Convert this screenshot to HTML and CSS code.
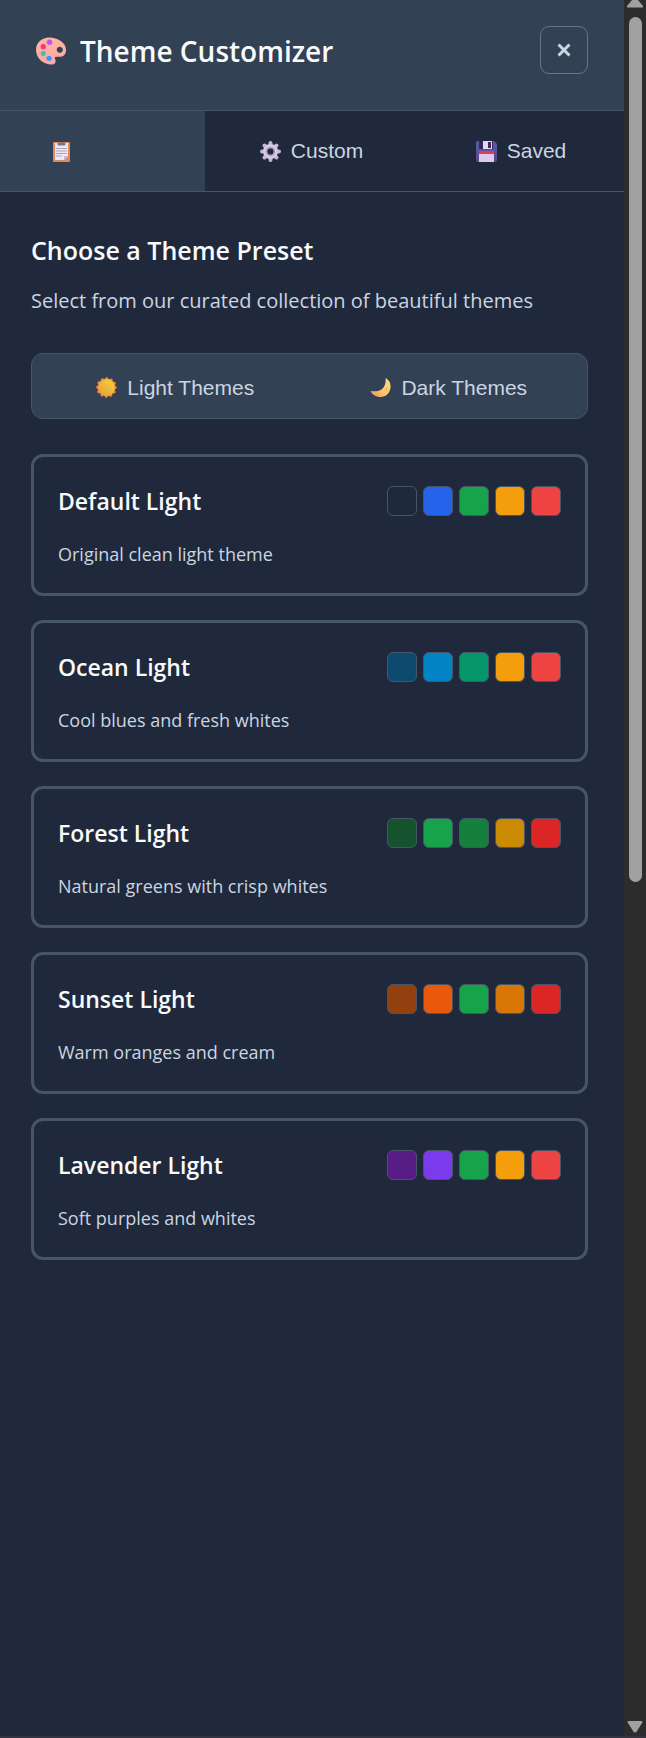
FILE: index.html
```html
<!DOCTYPE html>
<html lang="en">
<head>
<meta charset="utf-8">
<meta name="viewport" content="width=device-width, initial-scale=1">
<title>Theme Customizer</title>
<link rel="stylesheet" href="styles.css">
</head>
<body>
<div class="window">
  <main class="panel">
    <header class="header">
      <h1 class="title">
        <svg class="icon-palette" viewBox="0 0 32 28" aria-hidden="true">
          <defs><linearGradient id="skin" x1="0" y1="0" x2="0" y2="1"><stop offset="0" stop-color="#ffb7a0"/><stop offset="1" stop-color="#f8aaa4"/></linearGradient></defs>
          <path fill="url(#skin)" fill-rule="evenodd" d="M14 0C22 0 31 5 31 13c0 5-3 7-7 7h-3c-2 0-2 1-1 3 1 3-1 5-4 5C7 28 0 21 0 13 0 5 6 0 14 0Zm10.500 9.500a3.200 3.200 0 1 0 .1 0Z"/>
          <circle cx="14" cy="5" r="2.800" fill="#b85bea"/><circle cx="7.500" cy="9.500" r="2.700" fill="#f5338b"/><circle cx="7.500" cy="16.500" r="2.600" fill="#3dbdb4"/><circle cx="13.500" cy="21.500" r="2.700" fill="#4293f5"/>
        </svg>
        Theme Customizer
      </h1>
      <button class="close" type="button" aria-label="Close">
        <svg class="icon-close" viewBox="0 0 14 14" aria-hidden="true"><path d="M1.500 1.500l11 11M12.500 1.500l-11 11" stroke="currentColor" stroke-width="3"/></svg>
      </button>
    </header>

    <nav class="tabs" role="tablist">
      <button class="tab tab-active" type="button" role="tab" aria-selected="true">
        <svg class="icon" viewBox="0 0 21 21" aria-hidden="true">
          <rect x="2" y="1" width="17" height="20" rx="1" fill="#d98c59"/><path d="M4 2h13v13l-4 4H4Z" fill="#eee6f5"/><path d="M17 15l-4 4v-4Z" fill="#c9b8d8"/>
          <path d="M7 4V2h2.500a1.500 1.500 0 0 1 2 0H14v2Z" fill="#81737f" stroke="#81737f"/><path d="M5 7.500h11M5 10h11M5 12.500h11M5 15h6" stroke="#afa5b8"/>
        </svg>
        Presets
      </button>
      <button class="tab" type="button" role="tab" aria-selected="false">
        <svg class="icon" viewBox="0 0 21 21" aria-hidden="true">
          <g stroke="#c5b4d8" stroke-width="4" stroke-linecap="round"><path d="M10.500 2v17M2 10.500h17M4.500 4.500l12 12M16.500 4.500l-12 12"/></g>
          <circle cx="10.500" cy="10.500" r="7.500" fill="#d6cae0"/><circle cx="10.500" cy="10.500" r="4.500" fill="#a493b7"/><circle cx="10.500" cy="10.500" r="3" fill="#1f293b"/>
        </svg>
        Custom
      </button>
      <button class="tab" type="button" role="tab" aria-selected="false">
        <svg class="icon" viewBox="0 0 21 21" aria-hidden="true">
          <defs><linearGradient id="disk" x1="0" y1="0" x2="0" y2="1"><stop offset="0" stop-color="#5560a8"/><stop offset="1" stop-color="#62438a"/></linearGradient></defs>
          <path d="M2 0h16l3 3v16a2 2 0 0 1-2 2H2a2 2 0 0 1-2-2V2a2 2 0 0 1 2-2Z" fill="url(#disk)"/>
          <path d="M3 0h14v8H3Z" fill="#35265f"/><path d="M7 0h9v8H7Z" fill="#e3daf0"/><path d="M12 1h3v6h-3Z" fill="#41265e"/>
          <path d="M3 10h15v11H3Z" fill="#dccbea"/><path d="M3 10h15v3H3Z" fill="#e33a60"/>
        </svg>
        Saved
      </button>
    </nav>

    <section class="content">
      <h2 class="heading">Choose a Theme Preset</h2>
      <p class="lead">Select from our curated collection of beautiful themes</p>

      <div class="filters">
        <button class="filter" type="button">
          <svg class="icon" viewBox="0 0 21 21" aria-hidden="true">
            <defs><linearGradient id="sun" x1="1" y1="0" x2="0" y2="1"><stop offset="0" stop-color="#fbd23b"/><stop offset="1" stop-color="#dfa03a"/></linearGradient></defs>
            <circle cx="10.500" cy="10.500" r="9" fill="#f58a34"/><circle cx="10.500" cy="10.500" r="8.800" fill="none" stroke="#f58a34" stroke-width="3" stroke-linecap="round" stroke-dasharray="0.100 4.508"/><circle cx="10.500" cy="10.500" r="8.200" fill="url(#sun)"/>
          </svg>
          Light Themes
        </button>
        <button class="filter" type="button">
          <svg class="icon" viewBox="0 0 21 21" aria-hidden="true">
            <defs><linearGradient id="moon" x1="1" y1="0" x2="0" y2="1"><stop offset="0" stop-color="#ffe178"/><stop offset=".6" stop-color="#fbc56e"/><stop offset="1" stop-color="#ec8c55"/></linearGradient></defs>
            <path d="M15.500 1C19 3 21 6 20.500 10.500 20 16 16 20 10.500 20 6 20 2 17.500.5 14c5 1 10.500 0 13-3.500C15.500 7.500 16 4 15.500 1Z" fill="url(#moon)"/><circle cx="8" cy="17" r="1" fill="#e8a25c"/><circle cx="16.500" cy="12" r="1" fill="#f0b562"/>
          </svg>
          Dark Themes
        </button>
      </div>

      <div class="presets">
        <article class="card">
          <div class="card-head"><h3 class="card-title">Default Light</h3>
            <div class="swatches"><span class="swatch slate"></span><span class="swatch blue"></span><span class="swatch green"></span><span class="swatch amber"></span><span class="swatch red"></span></div></div>
          <p class="card-text">Original clean light theme</p>
        </article>
        <article class="card">
          <div class="card-head"><h3 class="card-title">Ocean Light</h3>
            <div class="swatches"><span class="swatch navy"></span><span class="swatch sky"></span><span class="swatch emerald"></span><span class="swatch amber"></span><span class="swatch red"></span></div></div>
          <p class="card-text">Cool blues and fresh whites</p>
        </article>
        <article class="card">
          <div class="card-head"><h3 class="card-title">Forest Light</h3>
            <div class="swatches"><span class="swatch pine"></span><span class="swatch green"></span><span class="swatch fern"></span><span class="swatch gold"></span><span class="swatch crimson"></span></div></div>
          <p class="card-text">Natural greens with crisp whites</p>
        </article>
        <article class="card">
          <div class="card-head"><h3 class="card-title">Sunset Light</h3>
            <div class="swatches"><span class="swatch rust"></span><span class="swatch orange"></span><span class="swatch green"></span><span class="swatch ochre"></span><span class="swatch crimson"></span></div></div>
          <p class="card-text">Warm oranges and cream</p>
        </article>
        <article class="card">
          <div class="card-head"><h3 class="card-title">Lavender Light</h3>
            <div class="swatches"><span class="swatch plum"></span><span class="swatch violet"></span><span class="swatch green"></span><span class="swatch amber"></span><span class="swatch red"></span></div></div>
          <p class="card-text">Soft purples and whites</p>
        </article>
      </div>
    </section>
  </main>

  <div class="scrollbar" aria-hidden="true">
    <svg class="arrow-up" viewBox="0 0 16 8"><path d="M5 0h6l5 6v1.500H0V6Z" fill="#a0a0a0"/></svg>
    <div class="thumb"></div>
    <div class="track"></div>
    <svg class="arrow-down" viewBox="0 0 16 12"><path d="M1.500 1h13L8.500 10.500h-1Z" fill="#a0a0a0" stroke="#a0a0a0" stroke-width="2" stroke-linejoin="round"/></svg>
  </div>
</div>
</body>
</html>
```
FILE: styles.css
```css
* {
  box-sizing: border-box;
}

body {
  margin: 0;
  background: #1f293b;
  color: #f8fafc;
  font-family: "Segoe UI", "Open Sans", "Noto Sans", sans-serif;
}

h1, h2, h3, p {
  margin: 0;
}

button {
  border: 0;
  padding: 0;
  background: none;
  color: #cbd5e1;
  font: 21px/24px "Liberation Sans", Arial, sans-serif;
  cursor: pointer;
}

.window {
  display: flex;
  min-height: 100vh;
  border-bottom: 2px solid #33343f;
}

.panel {
  flex: 1;
  min-width: 0;
}

.header {
  display: flex;
  justify-content: space-between;
  align-items: flex-start;
  padding: 26px 36px 34px;
  background: #334155;
  border-bottom: 1px solid #475569;
}

.title {
  display: flex;
  align-items: center;
  gap: 13px;
  font-size: 28px;
  line-height: 50px;
  font-weight: 600;
}

.icon-palette {
  width: 31px;
  height: 28px;
}

.close {
  display: grid;
  place-items: center;
  width: 48px;
  height: 48px;
  border: 1px solid #64748b;
  border-radius: 9px;
}

.icon-close {
  width: 14px;
  height: 14px;
}

.tabs {
  display: grid;
  grid-template-columns: 205fr 213fr 206fr;
  border-bottom: 1px solid #475569;
}

.tab {
  display: flex;
  justify-content: center;
  align-items: center;
  gap: 10px;
  height: 80px;
}

.tab-active {
  background: #334155;
  color: #324054;
}

.icon {
  flex: none;
  width: 21px;
  height: 21px;
}

.content {
  padding: 38px 36px 38px 31px;
}

.heading {
  font-size: 25px;
  line-height: 40px;
  font-weight: 600;
}

.lead {
  margin-top: 16px;
  color: #cbd5e1;
  font-size: 20px;
  line-height: 30px;
}

.filters {
  display: grid;
  grid-template-columns: 1fr 1fr;
  margin: 37px 0 35px;
  padding: 4px;
  background: #334155;
  border: 1px solid #475569;
  border-radius: 12px;
}

.filter {
  display: flex;
  justify-content: center;
  align-items: center;
  gap: 10px;
  height: 56px;
  padding: 3px 0 0 5px;
}

.presets {
  display: grid;
  gap: 24px;
}

.card {
  padding: 24px;
  border: 3px solid #475569;
  border-radius: 12px;
}

.card-head {
  display: flex;
  justify-content: space-between;
  align-items: center;
}

.card-title {
  font-size: 23px;
  line-height: 40px;
  font-weight: 600;
}

.card-text {
  margin-top: 18px;
  color: #cbd5e1;
  font-size: 18px;
  line-height: 30px;
}

.swatches {
  display: flex;
  gap: 6px;
}

.swatch {
  width: 30px;
  height: 30px;
  border: 1px solid #475569;
  border-radius: 6px;
}

.slate { background: #1e293b; }
.blue { background: #2563eb; }
.green { background: #16a34a; }
.amber { background: #f59e0b; }
.red { background: #ef4444; }
.navy { background: #0c4a6e; }
.sky { background: #0284c7; }
.emerald { background: #059669; }
.pine { background: #14532d; }
.fern { background: #15803d; }
.gold { background: #ca8a04; }
.crimson { background: #dc2626; }
.rust { background: #92400e; }
.orange { background: #ea580c; }
.ochre { background: #d97706; }
.plum { background: #581c87; }
.violet { background: #7c3aed; }

.scrollbar {
  display: flex;
  flex-direction: column;
  align-items: center;
  width: 22px;
  padding-bottom: 3px;
  background: #2c2c2c;
}

.arrow-up {
  width: 16px;
  height: 8px;
  margin-bottom: 9px;
}

.thumb {
  flex: 865;
  width: 13px;
  border-radius: 7px;
  background: #a0a0a0;
}

.track {
  flex: 839;
}

.arrow-down {
  width: 16px;
  height: 12px;
}
```
